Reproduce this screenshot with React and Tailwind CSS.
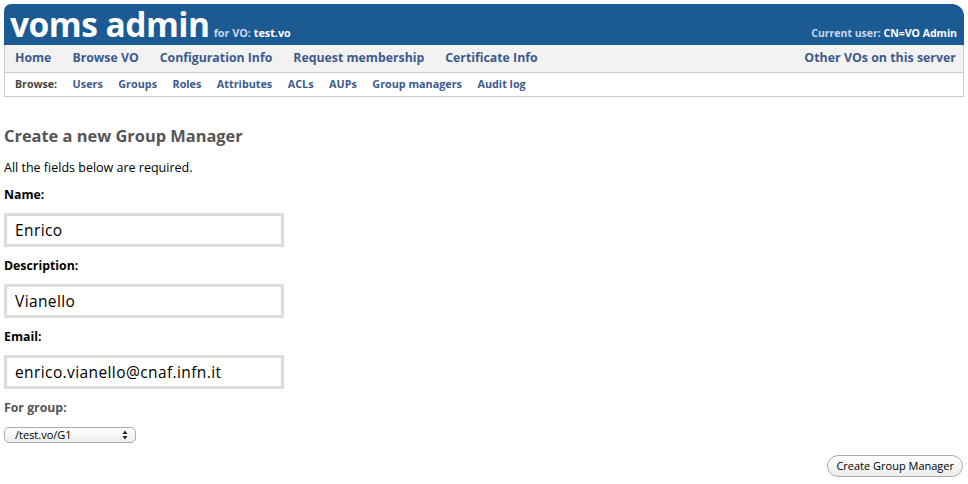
import React, { useState } from "react";

const navLinks = [
  "Home",
  "Browse VO",
  "Configuration Info",
  "Request membership",
  "Certificate Info",
];

const browseLinks = [
  "Users",
  "Groups",
  "Roles",
  "Attributes",
  "ACLs",
  "AUPs",
  "Group managers",
  "Audit log",
];

const Field = ({ label, value, onChange }) => (
  <div>
    <div className="text-[12.3px] font-bold text-black leading-[16px] mb-[10px]">{label}</div>
    <input
      type="text"
      value={value}
      onChange={(e) => onChange(e.target.value)}
      className="block w-[280px] h-[34px] px-[8px] border-[3px] border-[#dcdcdc] text-[15.5px] tracking-[0.4px] text-black outline-none"
    />
  </div>
);

const App = () => {
  const [name, setName] = useState("Enrico");
  const [description, setDescription] = useState("Vianello");
  const [email, setEmail] = useState("enrico.vianello@cnaf.infn.it");

  return (
    <div className="w-[968px] h-[484px] overflow-hidden bg-white font-['Open_Sans',sans-serif] text-black">
      {/* header */}
      <div className="mx-[4px] mt-[4px] h-[41px] bg-[#1c5a93] rounded-tl-[7px] rounded-tr-[12px] flex items-end justify-between px-[6px] pb-[3px]">
        <div className="flex items-end">
          <span className="text-[33.5px] font-bold text-white leading-[36px] tracking-[-0.5px]">voms admin</span>
          <span className="ml-[4px] mb-[2px] text-[10.8px] font-bold text-[#c9d8ea] leading-[14px]">
            for VO: <span className="text-white">test.vo</span>
          </span>
        </div>
        <span className="mb-[2px] mr-[1px] text-[10.5px] font-bold text-[#c9d8ea] leading-[14px]">
          Current user: <span className="text-white">CN=VO Admin</span>
        </span>
      </div>

      {/* main nav */}
      <div className="mx-[4px] h-[28px] bg-[#f2f2f2] border-x border-b border-[#c8c8c8] flex items-center justify-between px-[10px]">
        <div className="flex gap-[21px]">
          {navLinks.map((l) => (
            <a key={l} href="#" className="text-[12.3px] font-bold text-[#3c5a8c]">
              {l}
            </a>
          ))}
        </div>
        <a href="#" className="text-[12.4px] font-bold text-[#3c5a8c] mr-[-3px]">
          Other VOs on this server
        </a>
      </div>

      {/* browse nav */}
      <div className="mx-[4px] h-[24px] border-x border-b border-[#c8c8c8] flex items-center gap-[15.5px] px-[10px]">
        <span className="text-[10.6px] font-bold text-[#444]">Browse:</span>
        {browseLinks.map((l) => (
          <a key={l} href="#" className="text-[10.8px] font-bold text-[#3c5a8c]">
            {l}
          </a>
        ))}
      </div>

      {/* content */}
      <div className="px-[4px] pt-[29px]">
        <h2 className="text-[16.4px] font-bold text-[#555] leading-[20px]">Create a new Group Manager</h2>
        <p className="mt-[14px] mb-[11px] text-[12.5px] leading-[16px]">All the fields below are required.</p>
        <div className="flex flex-col gap-[11px]">
          <Field label="Name:" value={name} onChange={setName} />
          <Field label="Description:" value={description} onChange={setDescription} />
          <Field label="Email:" value={email} onChange={setEmail} />
        </div>
        <div className="mt-[11px] text-[12.3px] font-bold text-[#555] leading-[16px]">For group:</div>
        <div className="relative mt-[11px] w-[132px] h-[16px]">
          <select className="block appearance-none w-[132px] h-[16px] pl-[10px] pr-[16px] py-0 border border-[#aaa] rounded-[5px] bg-gradient-to-b from-white to-[#ededed] text-[11px] leading-[14px] text-black outline-none">
            <option>/test.vo/G1</option>
          </select>
          <svg className="absolute right-[8px] top-[3px] pointer-events-none" width="6" height="10" viewBox="0 0 6 10">
            <path d="M0.5 4 L3 0.5 L5.5 4 Z" fill="#222" />
            <path d="M0.5 6 L3 9.5 L5.5 6 Z" fill="#222" />
          </svg>
        </div>
        <div className="flex justify-end pr-[1px] mt-[12px]">
          <button className="h-[22px] px-[8px] rounded-full border border-[#aaa] bg-gradient-to-b from-white to-[#ededed] text-[11px] leading-[20px] text-black">
            Create Group Manager
          </button>
        </div>
      </div>
    </div>
  );
};

export default App;
